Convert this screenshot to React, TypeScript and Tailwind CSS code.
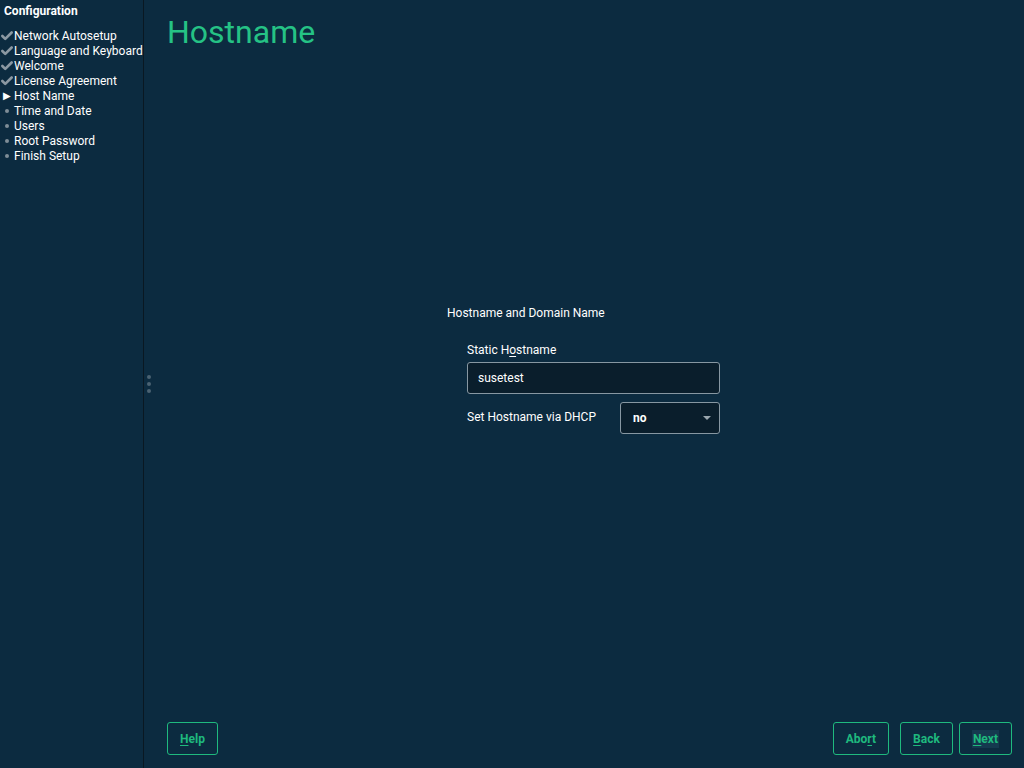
import { Check } from 'lucide-react';

const steps = [
  { label: 'Network Autosetup', state: 'done' },
  { label: 'Language and Keyboard', state: 'done' },
  { label: 'Welcome', state: 'done' },
  { label: 'License Agreement', state: 'done' },
  { label: 'Host Name', state: 'current' },
  { label: 'Time and Date', state: 'todo' },
  { label: 'Users', state: 'todo' },
  { label: 'Root Password', state: 'todo' },
  { label: 'Finish Setup', state: 'todo' },
];

function StepIcon({ state }: { state: string }) {
  if (state === 'done') {
    return <Check className="w-[14px] h-[14px] text-[#8b98a2]" strokeWidth={4.5} />;
  }
  if (state === 'current') {
    return <span className="text-white text-[10px] leading-none ml-[3px]">&#9654;</span>;
  }
  return <span className="block w-[4px] h-[4px] rounded-full bg-[#7f8d97] ml-[5px]" />;
}

function Sidebar() {
  return (
    <aside className="w-[144px] shrink-0 h-full border-r border-[#0a1822] pt-[3px]">
      <div className="pl-[4px] text-[12px] font-bold text-white leading-[16px]">Configuration</div>
      <ul className="mt-[9px]">
        {steps.map((s) => (
          <li key={s.label} className="flex items-center h-[15px] text-[12px] text-white whitespace-nowrap">
            <span className="w-[14px] flex items-center shrink-0">
              <StepIcon state={s.state} />
            </span>
            <span>{s.label}</span>
          </li>
        ))}
      </ul>
    </aside>
  );
}

function Button({ children, focused }: { children: React.ReactNode; focused?: boolean }) {
  return (
    <button className="h-[33px] px-[12px] border border-[#1fb97e] rounded-[3px] text-[12px] font-bold text-[#1fb97e]">
      <span className={focused ? 'bg-[#15394f] px-[1px] py-[2px]' : ''}>{children}</span>
    </button>
  );
}

export default function App() {
  return (
    <div className="w-[1024px] h-[768px] bg-[#0c2b40] flex font-['Roboto',sans-serif] overflow-hidden">
      <Sidebar />
      <main className="flex-1 flex flex-col relative">
        <div className="absolute left-[3px] top-[375px] flex flex-col gap-[3px]">
          <span className="w-[4px] h-[4px] rounded-full bg-[#4b6272]" />
          <span className="w-[4px] h-[4px] rounded-full bg-[#4b6272]" />
          <span className="w-[4px] h-[4px] rounded-full bg-[#4b6272]" />
        </div>
        <h1 className="pl-[23px] pt-[13px] text-[32px] leading-[38px] text-[#25c285]">Hostname</h1>

        <div className="flex-1 flex items-center justify-center pb-[34px]">
          <div className="w-[274px] text-[12px] text-white">
            <div className="leading-[14px]">Hostname and Domain Name</div>
            <div className="pl-[20px] pt-[23px]">
              <div className="leading-[14px]">
                Static H<span className="underline underline-offset-2">o</span>stname
              </div>
              <div className="mt-[5px] h-[32px] w-[253px] bg-[#0a1e2c] border border-[#8797a2] rounded-[3px] flex items-center px-[10px]">
                susetest
              </div>
              <div className="mt-[8px] w-[253px] flex items-center justify-between">
                <span className="-mt-[2px]">Set Hostname via DHCP</span>
                <div className="h-[32px] w-[100px] bg-[#0a1e2c] border border-[#8797a2] rounded-[3px] flex items-center justify-between pl-[12px] pr-[8px]">
                  <span className="font-bold">no</span>
                  <span className="w-0 h-0 border-l-[4px] border-r-[4px] border-t-[4px] border-l-transparent border-r-transparent border-t-[#9aa6ae]" />
                </div>
              </div>
            </div>
          </div>
        </div>

        <div className="flex items-center justify-between pl-[23px] pr-[12px] pb-[13px]">
          <Button>
            <span className="underline underline-offset-2">H</span>elp
          </Button>
          <div className="flex gap-[6px]">
            <div className="mr-[5px]">
              <Button>
                Abo<span className="underline underline-offset-2">r</span>t
              </Button>
            </div>
            <Button>
              <span className="underline underline-offset-2">B</span>ack
            </Button>
            <Button focused>
              <span className="underline underline-offset-2">N</span>ext
            </Button>
          </div>
        </div>
      </main>
    </div>
  );
}
